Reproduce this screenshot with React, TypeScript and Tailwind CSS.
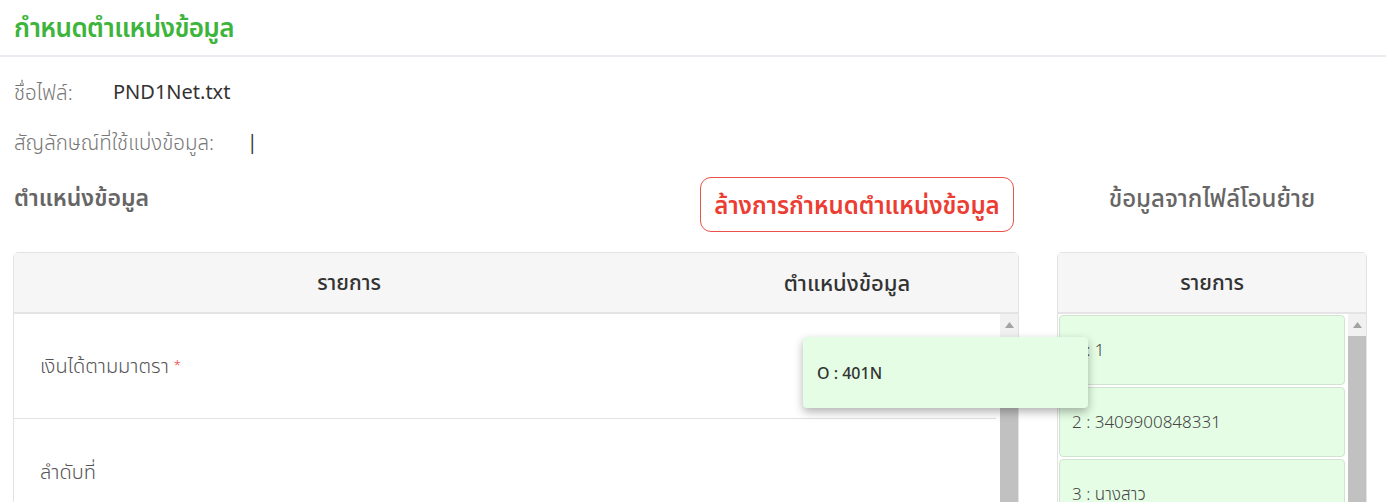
import React from "react";

const font = { fontFamily: '"Noto Sans", "Noto Sans Thai", Tahoma, sans-serif' };

function ScrollBar({ thumbTop }: { thumbTop: number }) {
  return (
    <div className="flex w-[18px] flex-col bg-[#f1f1f1]">
      <div className="flex h-[22px] items-center justify-center">
        <svg width="9" height="6" viewBox="0 0 9 6">
          <path d="M0 6 L4.5 0 L9 6 Z" fill="#a3a3a3" />
        </svg>
      </div>
      <div className="flex-1 bg-[#c1c1c1]" style={{ marginTop: thumbTop }} />
    </div>
  );
}

const sourceItems = ["1 : 1", "2 : 3409900848331", "3 : นางสาว", "4 : สมศรี"];

export default function App() {
  return (
    <div className="relative h-[502px] overflow-hidden bg-white text-[#333]" style={font}>
      <div className="mr-[10px] flex h-[57px] items-center border-b-2 border-[#e8ebef] px-[14px]">
        <h1 className="text-[26px] font-semibold tracking-tight text-[#3db43b]">กำหนดตำแหน่งข้อมูล</h1>
      </div>

      <div className="px-[14px] pt-[20px]">
        <div className="flex h-[30px] items-center text-[20.5px] font-light">
          <span className="w-[99px] text-[#777]">ชื่อไฟล์:</span>
          <span className="text-[20px] font-normal text-[#333]">PND1Net.txt</span>
        </div>
        <div className="mt-[20px] flex h-[30px] items-center text-[20.5px] font-light">
          <span className="w-[233px] text-[#777]">สัญลักษณ์ที่ใช้แบ่งข้อมูล:</span>
          <span className="text-[19px] font-normal text-[#333]">|</span>
        </div>
      </div>

      <div className="mt-[20px] flex gap-[38px] pl-[13px] pr-[29px]">
        <div className="flex-1">
          <div className="flex h-[55px] items-center justify-between pl-[1px] pr-[5px]">
            <h2 className="-mt-[14px] text-[23px] font-semibold text-[#666]">ตำแหน่งข้อมูล</h2>
            <button className="h-[55px] w-[314px] rounded-[11px] border border-[#e8524a] text-[24px] font-semibold text-[#ec3d33]">
              ล้างการกำหนดตำแหน่งข้อมูล
            </button>
          </div>
          <div className="mt-[20px] rounded-t-[5px] border border-[#e2e2e2]">
            <div className="flex h-[61px] items-center border-b-2 border-[#e4e4e4] bg-[#f6f6f6] text-[21px] font-medium text-[#333]">
              <div className="w-[670px] text-center">รายการ</div>
              <div className="flex-1 pr-[8px] text-center text-[22px]">ตำแหน่งข้อมูล</div>
            </div>
            <div className="flex h-[200px]">
              <div className="flex-1 pr-[4px]">
                <div className="flex h-[105px] items-center border-b border-[#e2e2e2] pl-[26px] text-[20px] font-light text-[#555]">
                  เงินได้ตามมาตรา<span className="ml-[5px] text-[13px] text-[#e53b33]">*</span>
                </div>
                <div className="flex h-[106px] items-center pl-[26px] text-[20px] font-light text-[#555]">ลำดับที่</div>
              </div>
              <ScrollBar thumbTop={2} />
            </div>
          </div>
        </div>

        <div className="w-[310px]">
          <div className="flex h-[55px] items-center justify-center">
            <h2 className="-mt-[14px] text-[24px] font-medium text-[#666]">ข้อมูลจากไฟล์โอนย้าย</h2>
          </div>
          <div className="mt-[20px] rounded-t-[5px] border border-[#e2e2e2]">
            <div className="flex h-[61px] items-center justify-center border-b-2 border-[#e4e4e4] bg-[#f6f6f6] text-[21px] font-medium text-[#333]">
              รายการ
            </div>
            <div className="flex h-[200px]">
              <div className="flex flex-1 flex-col gap-[2px] pl-[1px] pr-[3px] pt-[1px]">
                {sourceItems.map((item) => (
                  <div
                    key={item}
                    className="flex h-[70px] shrink-0 items-center rounded-[4px] border border-[#cfe5cf] bg-[#e4fde4] pl-[12px] text-[17px] font-light text-[#444]"
                  >
                    {item}
                  </div>
                ))}
              </div>
              <ScrollBar thumbTop={0} />
            </div>
          </div>
        </div>
      </div>

      <div className="absolute left-[803px] top-[337px] flex h-[71px] w-[285px] items-center rounded-[4px] bg-[#e4fde4] pl-[14px] text-[16px] font-medium text-[#333] shadow-[0_4px_10px_rgba(0,0,0,0.3)]">
        O : 401N
      </div>
    </div>
  );
}
